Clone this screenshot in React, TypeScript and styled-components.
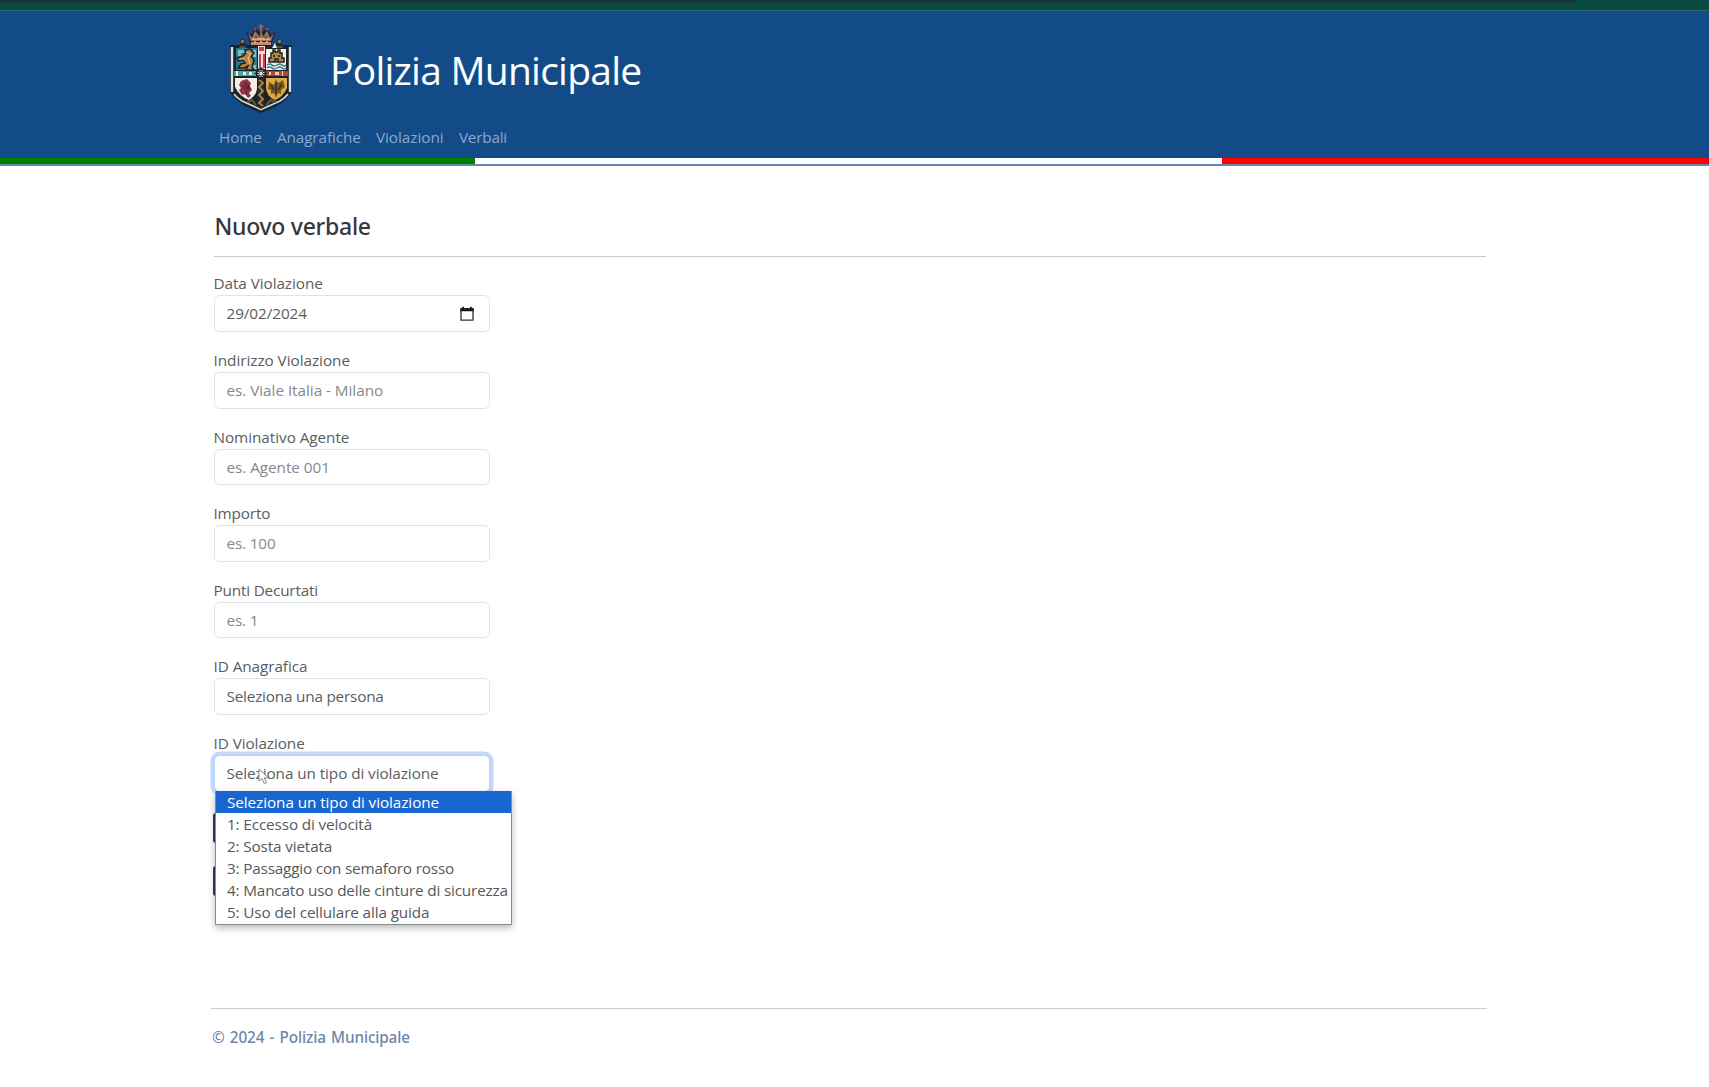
import React from "react";
import styled, { createGlobalStyle, css } from "styled-components";

const GlobalStyle = createGlobalStyle`
  *, *::before, *::after { box-sizing: border-box; }
  body {
    margin: 0;
    background: #fff;
    color: #5a5d60;
    font-family: "Open Sans", "Noto Sans", sans-serif;
    font-size: 15.3px;
    line-height: 23px;
    letter-spacing: -0.1px;
  }
`;

const Page = styled.div`
  display: flex;
  flex-direction: column;
  min-height: 1087px;
  overflow: hidden;
`;

const BrowserEdge = styled.div`
  height: 11px;
  background: #074a43;
  border-bottom: 1px solid #2a656c;
`;

const AddressBar = styled.div`
  width: 1576px;
  height: 3px;
  background: #173735;
  border-bottom-right-radius: 6px;
`;

const Header = styled.header`
  display: flex;
  flex-direction: column;
  height: 147px;
  padding-left: 219px;
  background: #134b89;
`;

const Brand = styled.div`
  display: flex;
  align-items: center;
  gap: 36px;
  height: 115px;
  padding: 1px 0 0 9px;
`;

const Title = styled.h1`
  margin: 0 0 -2px;
  color: #fff;
  font-size: 39px;
  font-weight: 400;
  line-height: 50px;
  letter-spacing: -0.76px;
`;

const Nav = styled.nav`
  display: flex;
  gap: 15.3px;
`;

const NavLink = styled.a<{ $spacing: number }>`
  color: #8ba7ca;
  letter-spacing: ${(p) => p.$spacing}px;
  text-decoration: none;
`;

const Flag = styled.div`
  display: grid;
  grid-template-columns: 474.5px 747px 1fr;
  height: 8px;
  border-bottom: 2px solid #6c85b0;
`;

const Band = styled.div<{ $color: string }>`
  background: ${(p) => p.$color};
`;

const Main = styled.main`
  flex: 0 0 842px;
  width: 1272px;
  margin-left: 213.5px;
  padding-top: 46px;
`;

const Heading = styled.h4`
  margin: 0;
  padding: 0 0 16px 1px;
  border-bottom: 1px solid #cbcbcd;
  color: #36383b;
  font-family: "Noto Sans", sans-serif;
  font-size: 23px;
  font-weight: 500;
  line-height: 28px;
  letter-spacing: -0.28px;
`;

const Form = styled.form`
  display: flex;
  flex-direction: column;
  gap: 17px;
  width: 276px;
  padding-top: 15.4px;
`;

const Field = styled.div`
  position: relative;
  display: flex;
  flex-direction: column;
`;

const Label = styled.label<{ $spacing?: number }>`
  height: 23px;
  letter-spacing: ${(p) => p.$spacing ?? -0.07}px;
`;

const control = css`
  display: flex;
  align-items: center;
  width: 100%;
  height: 36.6px;
  padding: 0 12px;
  border: 1px solid #dfe3e8;
  border-radius: 5.5px;
  background: #fff;
  color: #5a5d60;
`;

const Input = styled.input<{ $spacing?: number }>`
  ${control}
  font: inherit;
  letter-spacing: ${(p) => p.$spacing ?? -0.08}px;
  outline: none;
  &::placeholder { color: #85888c; opacity: 1; }
`;

const DateControl = styled.div`
  ${control}
  justify-content: space-between;
  padding-right: 14.5px;
  letter-spacing: -0.08px;
`;

const Select = styled.div<{ $focused?: boolean; $spacing: number }>`
  ${control}
  letter-spacing: ${(p) => p.$spacing}px;
  ${(p) =>
    p.$focused &&
    css`
      padding-top: 1px;
      border-color: #b9d0f6;
      box-shadow: 0 0 0 3.5px #c5d8fb;
    `}
`;

const Options = styled.ul`
  position: absolute;
  top: 59px;
  left: 1px;
  z-index: 2;
  width: 297px;
  height: 134.5px;
  margin: 0;
  padding: 0;
  border: 1px solid #8a8b8d;
  border-top: 0;
  background: #fff;
  box-shadow: 0 3px 7px rgba(0, 0, 0, 0.28);
  list-style: none;
`;

const Option = styled.li<{ $active?: boolean; $spacing: number }>`
  height: 22px;
  padding-left: 11.5px;
  color: ${(p) => (p.$active ? "#fff" : "#56595c")};
  background: ${(p) => (p.$active ? "#1866d0" : "transparent")};
  line-height: 22px;
  letter-spacing: ${(p) => p.$spacing}px;
  white-space: nowrap;
`;

const Cursor = styled.svg`
  position: absolute;
  top: 36px;
  left: 44px;
  z-index: 3;
`;

const Actions = styled.div`
  display: flex;
  flex-direction: column;
  gap: 23px;
  margin: 4px 0 0 -0.5px;
`;

const Action = styled.button`
  width: 80px;
  height: 30px;
  padding: 0;
  border: 0;
  border-radius: 3px;
  background: #2b3c60;
`;

const Footer = styled.footer`
  width: 1276px;
  margin-left: 211px;
  padding: 17px 0 0 1px;
  border-top: 1px solid #cdced0;
  color: #6d85ab;
  font-family: "Noto Sans", sans-serif;
  font-weight: 500;
  letter-spacing: -0.13px;
  word-spacing: 1.4px;
`;

const Crest = () => (
  <svg width="66" height="92" viewBox="0 0 66 92">
    <path d="M18 8 23 12 27 5 33 10 39 5 43 12 48 8 45 17 43 23H23L21 17Z" fill="#25242d" />
    <path d="M20 10 24 15 27 8 32 14 33 5 35 14 39 8 42 15 46 10 43 18H23Z" fill="#9d7a5d" />
    <path d="M33 1V8M30.5 3.5H35.5" stroke="#b0625f" strokeWidth="1.6" />
    <path d="M23 19H43V22H23Z" fill="#c98673" />
    <path d="M24 16H42M26 19H28M32 19H34M38 19H40" stroke="#dfc19b" strokeWidth="1.3" />
    <g fill="#9e4351"><circle cx="27" cy="6" r="1.5" /><circle cx="39" cy="6" r="1.5" /><circle cx="28" cy="14" r="1.8" /><circle cx="38" cy="14" r="1.8" /></g>
    <path d="M2 22H12L14 17H16L18 22H48L50 17H52L54 22H64V69Q58 78 49 83L33 90 17 83Q8 78 2 69Z" fill="#1b2329" />
    <g fill="#8f7657" stroke="#222932"><circle cx="14.5" cy="18.5" r="2.3" /><circle cx="51.5" cy="18.5" r="2.3" /><path d="M11 23H18V25H11ZM48 23H55V25H48Z" /></g>
    <path d="M4 24V69M62 24V69" stroke="#dce4e5" strokeWidth="2.4" />
    <path d="M6 71Q9 75 14 78L33 86.5 52 78Q57 75 60 71" fill="none" stroke="#cdd6d8" strokeWidth="1.8" />
    <path d="M8 25H29V47H8Z" fill="#277f91" />
    <path d="M10 27H16V30H13V33H10ZM25 27H28V34H25ZM24 42H28V46H24Z" fill="#84bec4" />
    <path d="M17 27 22 26 26 30 23 33 26 37 24 44 26 47H18L20 43 16 45H10L13 41 17 40 15 37 10 38 9 35 15 33 18 30Z" fill="#b58543" stroke="#211f21" strokeWidth="1.5" />
    <path d="M18 29 23 31 20 35 22 41M12 36H17" fill="none" stroke="#e5bd7c" strokeWidth="1.2" />
    <path d="M30 23H37V47H30Z" fill="#f3dfd8" />
    <path d="M31 24H36V28H31ZM31 31H33V45H31ZM35 31H37V45H35Z" fill="#c43d56" />
    <path d="M38 26H58V47H38Z" fill="#f2f2e9" />
    <path d="M41 39V35H43V30H45V27H47V29H50V27H52V30H54V35H56V39Z" fill="#a98a4f" stroke="#24231f" strokeWidth="1.5" />
    <path d="M46 32V34M51 32V34M47 39V36H50V39" stroke="#26221f" strokeWidth="1.6" fill="none" />
    <path d="M39 42Q42 40 44 42T49 42T54 42T58 42M39 45Q42 43 44 45T49 45T54 45T58 45" stroke="#357b89" strokeWidth="1.5" fill="none" />
    <path d="M47 20 49 25H44Z" fill="#f5f0dc" />
    <path d="M6 48H28V53H6Z" fill="#3faaa6" /><path d="M8 48H10V53H8ZM15 49H18V52H15ZM21 49H24V52H21Z" fill="#f6eee0" />
    <path d="M38 48H60V53H38Z" fill="#b93d4e" /><path d="M41 49H43V52H41ZM47 49H51V52H47ZM54 48H55V53H54Z" fill="#ead4aa" />
    <path d="M7 55H29V66Q28 73 21 77Q11 73 7 64Z" fill="#f4eee5" />
    <path d="M13 58 19 56 23 60 22 63 24 67 21 70 23 73 20 75 17 71 14 72 11 67 13 65 11 62Z" fill="#99304a" />
    <path d="M17 59 19 65 18 72M15 62 17 67M20 61 21 67" fill="none" stroke="#4b2530" strokeWidth="1.2" />
    <path d="M38 55H59V65Q55 74 47 77Q38 73 38 64Z" fill="#e0a944" />
    <path d="M48 56 50 60 55 57 57 64 53 67 53 71 50 70 48 75 46 70 43 71 43 67 40 66 41 59 46 62Z" fill="#765822" />
    <path d="M48 59V71M43 62 46 67M54 61 50 67" stroke="#292820" strokeWidth="1.3" />
    <path d="M30 55H36V84L33 86 30 84Z" fill="#2b2922" />
    <path d="M31 57 35 60 31 64 35 68 31 72 35 76 31 80 35 83" fill="none" stroke="#a88b4b" strokeWidth="1.8" />
    <path d="M19 79 24 77 28 82M38 82 43 77 48 79" fill="none" stroke="#66583a" strokeWidth="2" />
    <circle cx="33" cy="50.5" r="4.5" fill="#e8e6dc" stroke="#182024" strokeWidth="1.8" />
    <path d="M33 44V57M27 50.5H39M29 46.5 37 54.5M37 46.5 29 54.5" stroke="#1e2829" strokeWidth="1.1" />
    <circle cx="33" cy="50.5" r="1.7" fill="#eee9db" />
  </svg>
);

const Calendar = () => (
  <svg width="14" height="16" viewBox="0 0 14 16">
    <path d="M1 3H13V14.2H1Z" fill="none" stroke="#303236" strokeWidth="1.3" />
    <path d="M0.4 2.2H13.6V5.3H0.4ZM2.3 0.8H4V3H2.3ZM10 0.8H11.7V3H10Z" fill="#17191c" />
  </svg>
);

const links = [
  { text: "Home", spacing: -0.15 },
  { text: "Anagrafiche", spacing: -0.11 },
  { text: "Violazioni", spacing: -0.04 },
  { text: "Verbali", spacing: -0.2 },
];

const inputs = [
  { id: "indirizzo", label: "Indirizzo Violazione", hint: "es. Viale Italia - Milano", spacing: -0.04 },
  { id: "agente", label: "Nominativo Agente", hint: "es. Agente 001", spacing: -0.05 },
  { id: "importo", label: "Importo", hint: "es. 100", spacing: -0.16 },
  { id: "punti", label: "Punti Decurtati", hint: "es. 1", spacing: -0.18 },
];

const options = [
  { text: "Seleziona un tipo di violazione", spacing: -0.08 },
  { text: "1: Eccesso di velocità", spacing: -0.13 },
  { text: "2: Sosta vietata", spacing: -0.15 },
  { text: "3: Passaggio con semaforo rosso", spacing: -0.18 },
  { text: "4: Mancato uso delle cinture di sicurezza", spacing: -0.17 },
  { text: "5: Uso del cellulare alla guida", spacing: -0.13 },
];

export default function App() {
  return (
    <Page>
      <GlobalStyle />
      <BrowserEdge>
        <AddressBar />
      </BrowserEdge>
      <Header>
        <Brand>
          <Crest />
          <Title>Polizia Municipale</Title>
        </Brand>
        <Nav>
          {links.map((l) => (
            <NavLink key={l.text} $spacing={l.spacing}>{l.text}</NavLink>
          ))}
        </Nav>
      </Header>
      <Flag>
        <Band $color="#008000" />
        <Band $color="#fff" />
        <Band $color="#f00" />
      </Flag>
      <Main>
        <Heading>Nuovo verbale</Heading>
        <Form>
          <Field>
            <Label>Data Violazione</Label>
            <DateControl>
              29/02/2024
              <Calendar />
            </DateControl>
          </Field>
          {inputs.map((f) => (
            <Field key={f.id}>
              <Label htmlFor={f.id} $spacing={f.spacing}>{f.label}</Label>
              <Input id={f.id} placeholder={f.hint} $spacing={f.spacing} />
            </Field>
          ))}
          <Field>
            <Label>ID Anagrafica</Label>
            <Select $spacing={-0.2}>Seleziona una persona</Select>
          </Field>
          <Field>
            <Label>ID Violazione</Label>
            <Select $focused $spacing={-0.08}>Seleziona un tipo di violazione</Select>
            <Cursor width="12" height="17" viewBox="0 0 12 17">
              <path d="M1 1V13L4 10.5 6.3 15.5 8.5 14.5 6.3 9.8H10.5Z" fill="#fff" stroke="#85878a" strokeWidth="1" />
            </Cursor>
            <Options>
              {options.map((o, i) => (
                <Option key={o.text} $active={i === 0} $spacing={o.spacing}>{o.text}</Option>
              ))}
            </Options>
          </Field>
          <Actions>
            <Action type="button" aria-label="Salva" />
            <Action type="button" aria-label="Indietro" />
          </Actions>
        </Form>
      </Main>
      <Footer>© 2024 - Polizia Municipale</Footer>
    </Page>
  );
}
